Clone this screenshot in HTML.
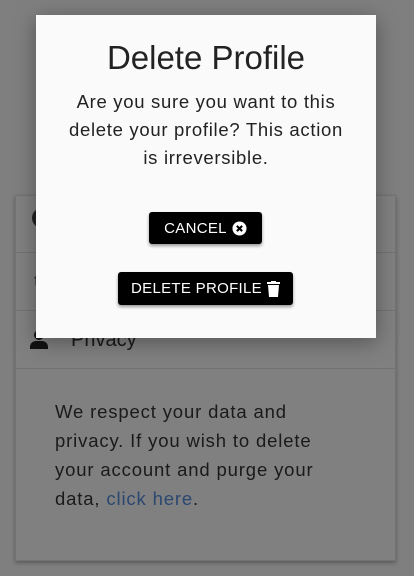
<!DOCTYPE html>
<html><head><style>
*{margin:0;padding:0;box-sizing:border-box}
body{width:414px;height:576px;background:#7f7f7f;font-family:"Liberation Sans",sans-serif;position:relative;overflow:hidden}
.card{position:absolute;left:15px;top:195px;width:381px;height:366px;background:#808080;border:1px solid #737373;box-shadow:0 2px 4px rgba(0,0,0,.3)}
.row{position:absolute;left:0;right:0;border-top:1px solid #737373}
.txt{position:absolute;left:39px;top:201px;font-size:18.5px;line-height:29px;color:#1a1a1a;width:330px;white-space:nowrap;letter-spacing:.85px}
.txt a{color:#2a4770;text-decoration:none}
.modal{position:absolute;left:36px;top:15px;width:340px;height:323px;background:#fafafa;box-shadow:0 4px 20px rgba(0,0,0,.35);text-align:center;color:#222}
h1{font-weight:normal;font-size:33px;margin-top:24px;line-height:38px}
p{font-size:18.5px;line-height:28px;margin-top:11px;white-space:nowrap;letter-spacing:.7px}
.btn{position:absolute;background:#000;color:#fff;font-size:15px;border-radius:3px;box-shadow:0 2px 3px rgba(0,0,0,.4);display:flex;align-items:center;justify-content:center;gap:5px;letter-spacing:.3px}
</style></head><body>
<div class="card">
<div style="position:absolute;left:16px;top:12px;width:14px;height:20px;background:#222;border-radius:10px 0 0 10px"></div>
<div class="row" style="top:56px"></div>
<div style="position:absolute;left:16px;top:76px;color:#222;font-size:16px">↑</div>
<div class="row" style="top:114px"></div>
<div style="position:absolute;left:14px;top:134px;width:18px;height:20px">
<div style="width:10px;height:10px;border-radius:50%;background:#111;margin-left:4px"></div>
<div style="width:18px;height:8px;background:#111;border-radius:6px 6px 0 0;margin-top:1px"></div></div>
<div style="position:absolute;left:55px;top:133px;font-size:20px;color:#1a1a1a">Privacy</div>
<div class="row" style="top:172px"></div>
<div class="txt">We respect your data and<br>privacy. If you wish to delete<br>your account and purge your<br>data, <a>click here</a>.</div>
</div>
<div class="modal">
<h1>Delete Profile</h1>
<p>Are you sure you want to this<br>delete your profile? This action<br>is irreversible.</p>
<div class="btn" style="left:113px;top:197px;width:113px;height:32px">CANCEL <svg width="15" height="15" viewBox="0 0 16 16"><circle cx="8" cy="8" r="7.5" fill="#fff"/><path d="M5.2 5.2L10.8 10.8M10.8 5.2L5.2 10.8" stroke="#000" stroke-width="2.2"/></svg></div>
<div class="btn" style="left:82px;top:257px;width:175px;height:33px">DELETE PROFILE <svg width="13" height="16" viewBox="0 0 13 16"><rect x="0" y="1" width="13" height="2" fill="#fff"/><rect x="4" y="0" width="5" height="2" fill="#fff"/><path d="M1 4h11l-1 12H2z" fill="#fff"/></svg></div>
</div>
</body></html>
